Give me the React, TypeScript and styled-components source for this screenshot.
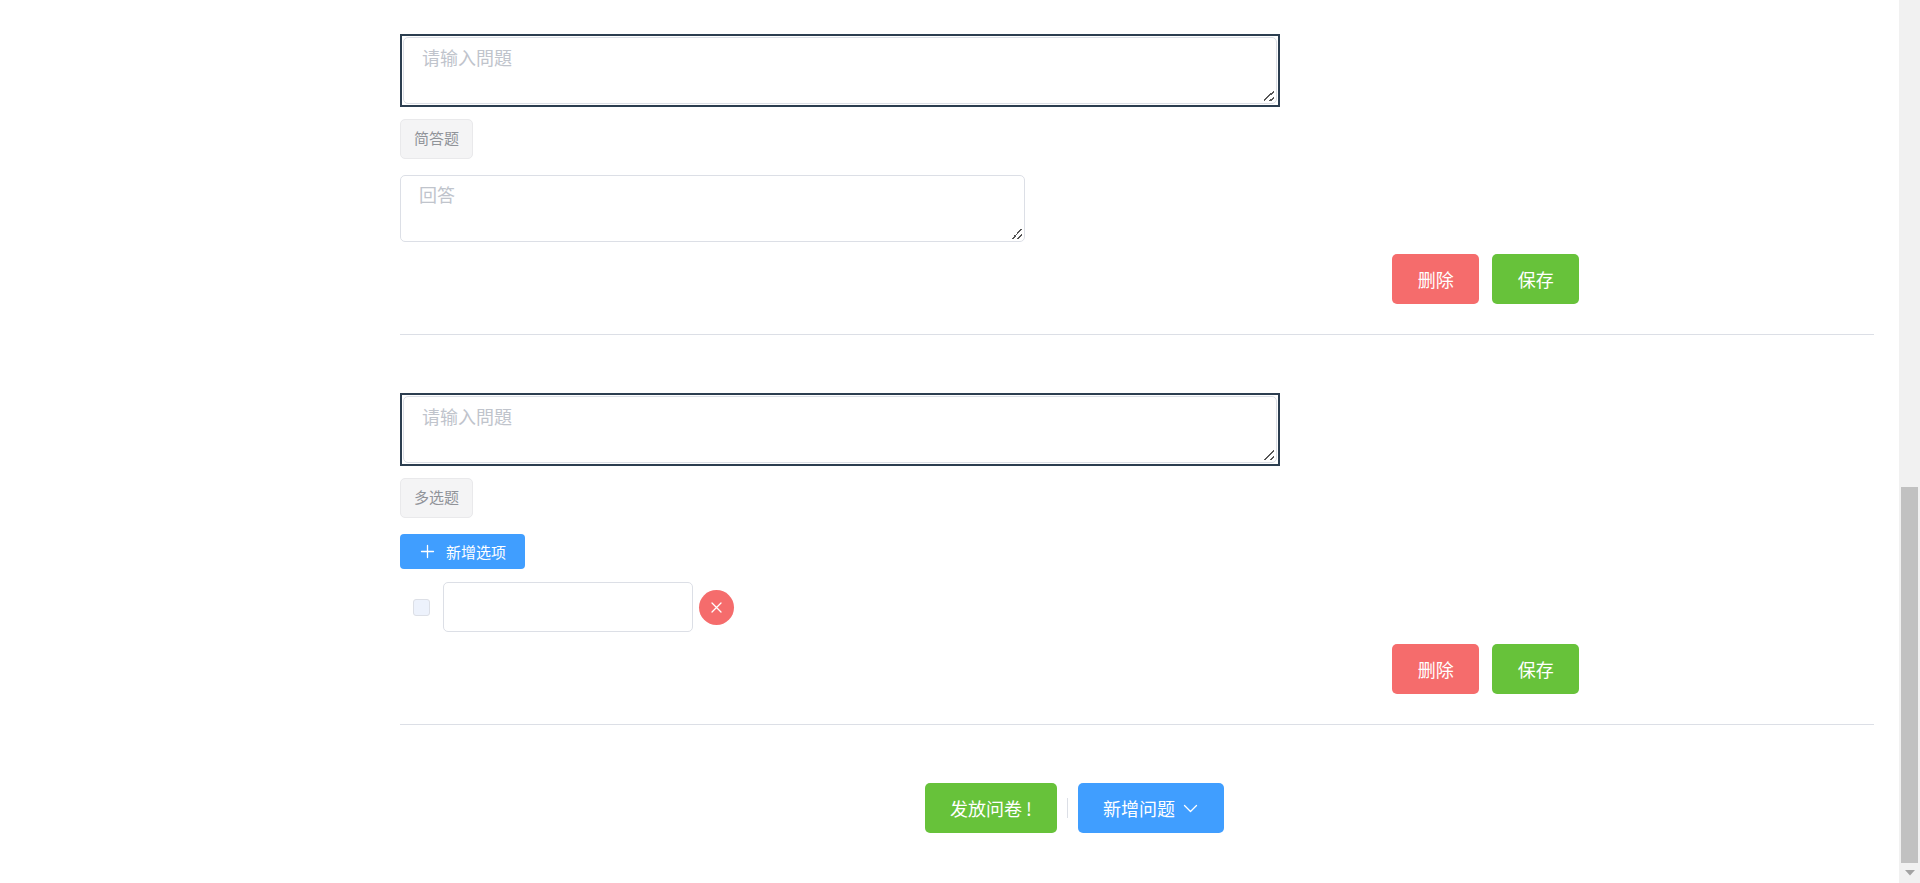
import React from "react";
import styled, { createGlobalStyle, css } from "styled-components";

const GlobalStyle = createGlobalStyle`
  *, *::before, *::after { box-sizing: border-box; }
  body {
    margin: 0;
    background: #fff;
    color: #2c3e50;
    font-family: "Noto Sans CJK SC", sans-serif;
    font-size: 18px;
  }
  button, input, textarea { font: inherit; }
`;

const Shell = styled.div`
  display: flex;
  align-items: flex-start;
`;

const Main = styled.main`
  flex: 1;
  min-width: 0;
  margin-left: 250px;
  padding-top: 34px;
`;

const Question = styled.section`
  display: flex;
  flex-direction: column;
  align-items: flex-start;
  margin: 0 25px 58px 150px;
  border-bottom: 1px solid #dcdfe6;
  padding-bottom: 30px;
`;

const area = css`
  display: block;
  border: 1px solid #dcdfe6;
  border-radius: 5px;
  background: #fff;
  color: #606266;
  line-height: 26px;
  resize: vertical;
  outline: none;
  &::placeholder { color: #c0c4cc; opacity: 1; }
  &::-webkit-resizer {
    background:
      linear-gradient(135deg, transparent 45%, #555 45%, #555 55%, transparent 55%, transparent 75%, #555 75%, #555 85%, transparent 85%)
      3px 3px / 10px 10px no-repeat;
  }
`;

const TitleFrame = styled.div`
  width: 880px;
  max-width: 100%;
  border: 2px solid #2c3e50;
  padding: 1px;
`;

const TitleArea = styled.textarea`
  ${area}
  width: 100%;
  height: 67px;
  padding: 6px 18px;
`;

const AnswerArea = styled.textarea`
  ${area}
  width: 625px;
  max-width: 100%;
  height: 67px;
  padding: 5px 18px;
`;

const Tag = styled.span`
  height: 40px;
  margin: 12px 0 16px;
  padding: 0 13px;
  border: 1px solid #e9e9eb;
  border-radius: 5px;
  background: #f4f4f5;
  color: #909399;
  font-size: 15px;
  line-height: 36px;
`;

const tones = { danger: "#f56c6c", success: "#67c23a", primary: "#409eff" };

const Button = styled.button<{ $tone: keyof typeof tones }>`
  display: inline-flex;
  align-items: center;
  justify-content: center;
  gap: 7px;
  min-width: 87px;
  height: 50px;
  padding: 0 25px;
  border: 0;
  border-radius: 5px;
  background: ${(p) => tones[p.$tone]};
  color: #fff;
  line-height: 24px;
  white-space: nowrap;
  cursor: pointer;
`;

const SmallButton = styled(Button)`
  gap: 10px;
  height: 35px;
  padding: 0 19px;
  border-radius: 4px;
  font-size: 15px;
`;

const RoundButton = styled(Button)`
  min-width: 0;
  width: 35px;
  height: 35px;
  padding: 0;
  border-radius: 50%;
`;

const Option = styled.div`
  display: flex;
  align-items: center;
  margin-top: 13px;
  padding-left: 13px;
`;

const Check = styled.input`
  appearance: none;
  width: 17px;
  height: 17px;
  margin: 0 13px 0 0;
  border: 1px solid #dcdfe6;
  border-radius: 3px;
  background: #edf2fc;
`;

const OptionInput = styled.input`
  width: 250px;
  height: 50px;
  margin-right: 6px;
  padding: 0 19px;
  border: 1px solid #dcdfe6;
  border-radius: 5px;
  color: #606266;
  outline: none;
`;

const Actions = styled.div`
  display: flex;
  align-self: stretch;
  justify-content: flex-end;
  gap: 13px;
  margin-top: 12px;
  padding-right: 20%;
`;

const Footer = styled.footer`
  display: flex;
  align-items: center;
  justify-content: center;
  padding-bottom: 49px;
`;

const Separator = styled.span`
  width: 1px;
  height: 20px;
  margin: 0 10px;
  background: #dcdfe6;
`;

const Scrollbar = styled.div`
  position: sticky;
  top: 0;
  display: flex;
  flex-direction: column;
  align-items: center;
  width: 21px;
  height: 100vh;
  background: #f1f1f1;
`;

const Thumb = styled.div`
  width: 17px;
  height: 376px;
  margin-top: auto;
  background: #c1c1c1;
`;

const ScrollDown = styled.div`
  display: flex;
  align-items: center;
  height: 20px;
`;

const Stroke = ({ d, size }: { d: string; size: number }) => (
  <svg width={size} height={size} viewBox={`0 0 ${size} ${size}`} fill="none" stroke="currentColor" strokeWidth="1.3" strokeLinecap="round" strokeLinejoin="round" aria-hidden="true">
    <path d={d} />
  </svg>
);

const QuestionBlock = ({ kind, children }: { kind: string; children: React.ReactNode }) => (
  <Question>
    <TitleFrame>
      <TitleArea placeholder="请输入問題" aria-label="请输入問題" />
    </TitleFrame>
    <Tag>{kind}</Tag>
    {children}
    <Actions>
      <Button type="button" $tone="danger">删除</Button>
      <Button type="button" $tone="success">保存</Button>
    </Actions>
  </Question>
);

export default function App() {
  return (
    <>
      <GlobalStyle />
      <Shell>
        <Main>
          <QuestionBlock kind="简答题">
            <AnswerArea placeholder="回答" aria-label="回答" />
          </QuestionBlock>
          <QuestionBlock kind="多选题">
            <SmallButton type="button" $tone="primary">
              <Stroke size={17} d="M8.5 2.5v12M2.5 8.5h12" />
              新增选项
            </SmallButton>
            <Option>
              <Check type="checkbox" disabled aria-label="选项" />
              <OptionInput type="text" aria-label="选项内容" />
              <RoundButton type="button" $tone="danger" aria-label="删除选项">
                <Stroke size={15} d="M3 3l9 9M12 3l-9 9" />
              </RoundButton>
            </Option>
          </QuestionBlock>
          <Footer>
            <Button type="button" $tone="success">发放问卷 !</Button>
            <Separator />
            <Button type="button" $tone="primary">
              新增问题
              <Stroke size={17} d="M2.5 5.5l6 6 6-6" />
            </Button>
          </Footer>
        </Main>
        <Scrollbar aria-hidden="true">
          <Thumb />
          <ScrollDown>
            <svg width="10" height="6" viewBox="0 0 10 6"><path d="M0 0h10L5 5.5z" fill="#a3a3a3" /></svg>
          </ScrollDown>
        </Scrollbar>
      </Shell>
    </>
  );
}
